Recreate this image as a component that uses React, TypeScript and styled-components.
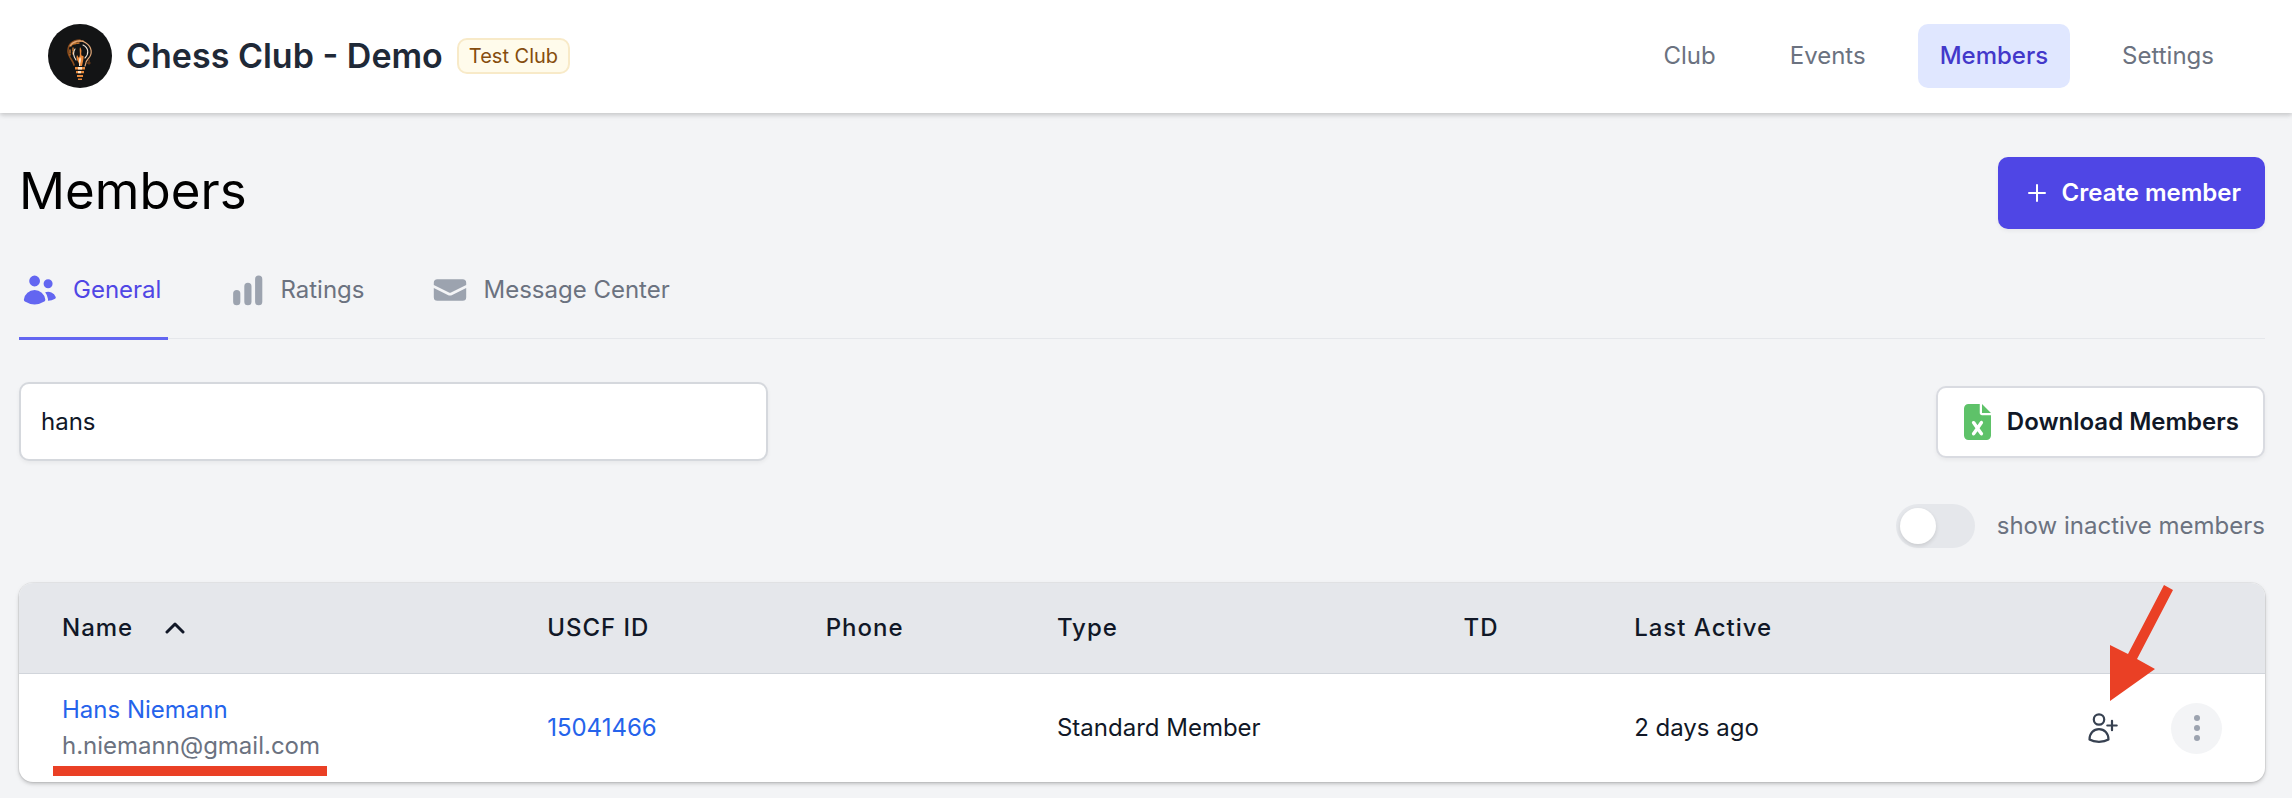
import React, { useState } from "react";
import styled, { createGlobalStyle } from "styled-components";
import { FaFileExcel } from "react-icons/fa6";

const GlobalStyle = createGlobalStyle`
  *, *::before, *::after { box-sizing: border-box; }
  body {
    margin: 0;
    background: #f3f4f6;
    color: #111827;
    font-family: Inter, "Liberation Sans", sans-serif;
    font-size: 24px;
    line-height: 36px;
  }
  button, input { font: inherit; color: inherit; }
  a { text-decoration: none; }
`;

const Header = styled.header`
  display: flex;
  align-items: center;
  justify-content: space-between;
  padding: 24px 56px 25px 48px;
  background: #fff;
  box-shadow: 0 2px 6px rgba(0, 0, 0, 0.1), 0 2px 4px rgba(0, 0, 0, 0.1);
`;

const Brand = styled.div`
  display: flex;
  align-items: center;
  gap: 14px;
`;

const ClubName = styled.span`
  color: #1f2937;
  font-size: 34px;
  font-weight: 600;
  line-height: 44px;
`;

const Badge = styled.span`
  padding: 0 10px;
  border: 2px solid #f8eac8;
  border-radius: 10px;
  background: #fffbeb;
  color: #854d0e;
  font-size: 20px;
  line-height: 32px;
`;

const MainNav = styled.nav`
  display: flex;
  gap: 30px;
`;

const NavLink = styled.a<{ $active?: boolean }>`
  padding: 14px 22px;
  border-radius: 10px;
  background: ${(p) => (p.$active ? "#e0e7ff" : "transparent")};
  color: ${(p) => (p.$active ? "#4338ca" : "#6b7280")};
  font-weight: ${(p) => (p.$active ? 500 : 400)};
`;

const Main = styled.main`
  padding: 44px 27px 16px 19px;
`;

const TitleRow = styled.div`
  display: flex;
  align-items: center;
  justify-content: space-between;
`;

const Title = styled.h1`
  margin: 0;
  padding-bottom: 4px;
  color: #000;
  font-size: 51px;
  font-weight: 400;
  line-height: 64px;
`;

const Button = styled.button<{ $primary?: boolean }>`
  display: flex;
  align-items: center;
  gap: 16px;
  height: 72px;
  padding: 0 24px 0 ${(p) => (p.$primary ? "30px" : "26px")};
  border: ${(p) => (p.$primary ? "0" : "2px solid #d9dbe1")};
  border-radius: 10px;
  background: ${(p) => (p.$primary ? "#4f46e5" : "#fff")};
  color: ${(p) => (p.$primary ? "#fff" : "#111827")};
  font-weight: 600;
  box-shadow: 0 2px 4px rgba(0, 0, 0, 0.05);
`;

const ExcelIcon = styled(FaFileExcel)`
  width: 27px;
  height: 36px;
  fill: #5ec269;
`;

const Tabs = styled.nav`
  display: flex;
  gap: 58px;
  margin-top: 14px;
  border-bottom: 1px solid #e5e7eb;
`;

const Tab = styled.a<{ $active?: boolean }>`
  display: flex;
  align-items: center;
  gap: 15px;
  margin-bottom: -2px;
  padding: 29px 7px 29px 3px;
  border-bottom: 3px solid ${(p) => (p.$active ? "#6366f1" : "transparent")};
  color: ${(p) => (p.$active ? "#4f46e5" : "#6b7280")};

  svg {
    width: 36px;
    height: 36px;
    fill: ${(p) => (p.$active ? "#6366f1" : "#9ca3af")};
  }
`;

const Controls = styled.div`
  display: flex;
  align-items: center;
  justify-content: space-between;
  margin-top: 43px;
`;

const SearchInput = styled.input`
  width: 33.3333%;
  height: 79px;
  padding: 0 20px;
  border: 2px solid #d5d8dd;
  border-radius: 10px;
  background: #fff;
  box-shadow: 0 2px 4px rgba(0, 0, 0, 0.05);
`;

const ToggleLabel = styled.label`
  display: flex;
  align-items: center;
  gap: 22px;
  width: max-content;
  margin: 43px 0 0 auto;
  color: #6b7280;
`;

const Toggle = styled.input`
  appearance: none;
  display: flex;
  align-items: center;
  width: 79px;
  height: 44px;
  margin: 0;
  padding: 0 4px;
  border-radius: 22px;
  background: #e5e7eb;

  &::before {
    content: "";
    width: 36px;
    height: 36px;
    border-radius: 50%;
    background: #fff;
    box-shadow: 0 2px 4px rgba(0, 0, 0, 0.12);
  }

  &:checked {
    justify-content: flex-end;
    background: #4f46e5;
  }
`;

const TableCard = styled.div`
  position: relative;
  margin-top: 35px;
  border-radius: 14px;
  background: #fff;
  box-shadow: 0 0 0 1px rgba(0, 0, 0, 0.05), 0 2px 5px rgba(0, 0, 0, 0.12), 0 2px 3px rgba(0, 0, 0, 0.1);
`;

const Table = styled.table`
  width: 100%;
  table-layout: fixed;
  border-collapse: separate;
  border-spacing: 0;
`;

const Col = styled.col<{ $width?: string }>`
  width: ${(p) => p.$width ?? "auto"};
`;

const HeadCell = styled.th`
  height: 91px;
  padding: 0 43px;
  border-bottom: 1px solid #d1d5db;
  background: #e5e7eb;
  font-weight: 500;
  letter-spacing: 1px;
  text-align: left;
  white-space: nowrap;

  &:first-child { border-top-left-radius: 14px; }
  &:last-child { border-top-right-radius: 14px; }
`;

const SortButton = styled.button`
  display: flex;
  align-items: center;
  gap: 32px;
  padding: 0;
  border: 0;
  background: none;
  letter-spacing: inherit;
`;

const Cell = styled.td`
  padding: 18px 43px;
  white-space: nowrap;
`;

const TextLink = styled.a`
  color: #2563eb;
`;

const Email = styled.div`
  position: relative;
  width: max-content;
  color: #6b7280;
`;

const Underline = styled.span`
  position: absolute;
  right: -7px;
  bottom: -12px;
  left: -9px;
  height: 10px;
  background: #ea4025;
`;

const Actions = styled.div`
  display: flex;
  align-items: center;
  justify-content: flex-end;
  gap: 50px;
`;

const IconButton = styled.button<{ $round?: boolean }>`
  display: grid;
  place-items: center;
  width: ${(p) => (p.$round ? "51px" : "36px")};
  height: ${(p) => (p.$round ? "51px" : "36px")};
  padding: 0;
  border: 0;
  border-radius: 50%;
  background: ${(p) => (p.$round ? "#f3f4f6" : "transparent")};
`;

const Arrow = styled.svg`
  position: absolute;
  top: 0;
  right: 92px;
  pointer-events: none;
`;

const ClubLogo = () => (
  <svg width="64" height="64" viewBox="0 0 64 64" aria-hidden="true">
    <circle cx="32" cy="32" r="32" fill="#131415" />
    <g fill="none" strokeLinecap="round">
      <path d="M26 41c-1-5-6-8-6-14 0-7 5-11 12-11" stroke="#8a4b1b" strokeWidth="1.6" />
      <path d="M23 22c2-4 7-5 12-5M25 20l6-1M22 26v5M25 24v6" stroke="#c9782f" strokeWidth="1.4" strokeDasharray="3 1.4" />
      <path d="M22 22c3-5 11-7 16-3 6 4 7 11 2 16-2 2-2 4-3 7" stroke="#e2a878" strokeWidth="1.2" />
      <path d="M35 21c6 3 6 9 2 13M27 25c-3 4-1 8 1 11" stroke="#f4e6d8" strokeWidth="1.1" />
      <path d="M39 39h3M41 36v4" stroke="#6b3a17" strokeWidth="1.5" />
    </g>
    <path d="M32 23c3 4 0 6 2 9 3-2 1 5 0 10h-3c1-4-4-6-2-11l2 3c2-4 0-6 1-11z" fill="#ee8a3a" />
    <path d="M32 33c2 3 0 5 0 9h-1c1-3-1-5 1-9z" fill="#fff1dc" />
    <path d="M27 43h10v2.500H27zM28 47h8v2.200h-8zM29 51h6v2h-6zM30 54.500h4v1.500h-4z" fill="#e98a3c" />
    <path d="M30 43h4v2.500h-4zM30 47h3v2.200h-3z" fill="#ffe3c2" />
  </svg>
);

const UsersIcon = () => (
  <svg viewBox="0 0 20 20" aria-hidden="true">
    <path d="M7 8a3 3 0 1 0 0-6 3 3 0 0 0 0 6ZM14.5 9a2.5 2.5 0 1 0 0-5 2.5 2.5 0 0 0 0 5ZM1.615 16.428a1.224 1.224 0 0 1-.569-1.175 6.002 6.002 0 0 1 11.908 0c.058.467-.172.92-.57 1.174A9.953 9.953 0 0 1 7 18a9.953 9.953 0 0 1-5.385-1.572ZM14.5 16h-.106c.07-.297.088-.611.048-.933a7.47 7.47 0 0 0-1.588-3.755 4.502 4.502 0 0 1 5.874 2.636.818.818 0 0 1-.36.98A7.465 7.465 0 0 1 14.5 16Z" />
  </svg>
);

const ChartIcon = () => (
  <svg viewBox="0 0 20 20" aria-hidden="true">
    <path d="M16.500 2A2 2 0 0 0 14.500 4v12.500a2 2 0 0 0 4 0V4a2 2 0 0 0-2-2ZM10.500 6a2 2 0 0 0-2 2v8.500a2 2 0 0 0 4 0V8a2 2 0 0 0-2-2ZM4.300 10a2 2 0 0 0-2 2v4.500a2 2 0 0 0 4 0V12a2 2 0 0 0-2-2Z" />
  </svg>
);

const MailIcon = () => (
  <svg viewBox="0 0 20 20" aria-hidden="true">
    <path d="M3 4a2 2 0 0 0-2 2v1.161l8.441 4.221a1.25 1.25 0 0 0 1.118 0L19 7.162V6a2 2 0 0 0-2-2H3Z" />
    <path d="m19 8.839-7.77 3.885a2.75 2.75 0 0 1-2.46 0L1 8.839V14a2 2 0 0 0 2 2h14a2 2 0 0 0 2-2V8.839Z" />
  </svg>
);

const PlusIcon = () => (
  <svg width="18" height="18" viewBox="0 0 18 18" stroke="currentColor" strokeWidth="2" strokeLinecap="round" aria-hidden="true">
    <path d="M9 1v16M1 9h16" />
  </svg>
);

const ChevronUp = () => (
  <svg width="20" height="14" viewBox="0 0 20 14" fill="none" stroke="currentColor" strokeWidth="3" strokeLinecap="round" strokeLinejoin="round" aria-hidden="true">
    <path d="M2 11l8-8 8 8" />
  </svg>
);

const UserPlusIcon = () => (
  <svg width="36" height="36" viewBox="0 0 36 36" fill="none" stroke="#374151" strokeWidth="2.2" strokeLinecap="round" strokeLinejoin="round" aria-hidden="true">
    <circle cx="14" cy="9.500" r="5.200" />
    <path d="M4.500 29.500c0-6 4-10.300 9.500-10.300s9.500 4.300 9.500 10.300c-2.500 1.600-6 2.300-9.500 2.300s-7-.7-9.500-2.300Z" />
    <path d="M27 10.800v9.400M22.300 15.500h9.400" />
  </svg>
);

const DotsIcon = () => (
  <svg width="6" height="28" viewBox="0 0 6 28" fill="#9ca3af" aria-hidden="true">
    <circle cx="3" cy="4" r="3" />
    <circle cx="3" cy="14" r="3" />
    <circle cx="3" cy="24" r="3" />
  </svg>
);

const navItems = ["Club", "Events", "Members", "Settings"];
const tabItems = [
  { label: "General", Icon: UsersIcon },
  { label: "Ratings", Icon: ChartIcon },
  { label: "Message Center", Icon: MailIcon },
];
const columns = [
  { label: "Name", width: "21.6%" },
  { label: "USCF ID", width: "12.4%" },
  { label: "Phone", width: "10.3%" },
  { label: "Type", width: "18.1%" },
  { label: "TD", width: "7.6%" },
  { label: "Last Active", width: undefined },
  { label: "", width: "14%" },
];
const members = [
  { name: "Hans Niemann", email: "h.niemann@gmail.com", uscf: "15041466", phone: "", type: "Standard Member", td: "", active: "2 days ago" },
];

export default function App() {
  const [query, setQuery] = useState("hans");
  const [showInactive, setShowInactive] = useState(false);

  return (
    <>
      <GlobalStyle />
      <Header>
        <Brand>
          <ClubLogo />
          <ClubName>Chess Club - Demo</ClubName>
          <Badge>Test Club</Badge>
        </Brand>
        <MainNav>
          {navItems.map((item) => (
            <NavLink key={item} href="#" $active={item === "Members"}>
              {item}
            </NavLink>
          ))}
        </MainNav>
      </Header>
      <Main>
        <TitleRow>
          <Title>Members</Title>
          <Button type="button" $primary>
            <PlusIcon />
            Create member
          </Button>
        </TitleRow>
        <Tabs>
          {tabItems.map(({ label, Icon }) => (
            <Tab key={label} href="#" $active={label === "General"}>
              <Icon />
              {label}
            </Tab>
          ))}
        </Tabs>
        <Controls>
          <SearchInput
            type="text"
            aria-label="Search members"
            value={query}
            onChange={(e) => setQuery(e.target.value)}
          />
          <Button type="button">
            <ExcelIcon aria-hidden="true" />
            Download Members
          </Button>
        </Controls>
        <ToggleLabel>
          <Toggle type="checkbox" checked={showInactive} onChange={(e) => setShowInactive(e.target.checked)} />
          show inactive members
        </ToggleLabel>
        <TableCard>
          <Table>
            <colgroup>
              {columns.map((c) => (
                <Col key={c.label} $width={c.width} />
              ))}
            </colgroup>
            <thead>
              <tr>
                {columns.map((c) => (
                  <HeadCell key={c.label} scope="col">
                    {c.label === "Name" ? (
                      <SortButton type="button">
                        Name
                        <ChevronUp />
                      </SortButton>
                    ) : (
                      c.label
                    )}
                  </HeadCell>
                ))}
              </tr>
            </thead>
            <tbody>
              {members.map((m) => (
                <tr key={m.uscf}>
                  <Cell>
                    <TextLink href="#">{m.name}</TextLink>
                    <Email>
                      {m.email}
                      <Underline />
                    </Email>
                  </Cell>
                  <Cell>
                    <TextLink href="#">{m.uscf}</TextLink>
                  </Cell>
                  <Cell>{m.phone}</Cell>
                  <Cell>{m.type}</Cell>
                  <Cell>{m.td}</Cell>
                  <Cell>{m.active}</Cell>
                  <Cell>
                    <Actions>
                      <IconButton type="button" aria-label="Add user">
                        <UserPlusIcon />
                      </IconButton>
                      <IconButton type="button" aria-label="More actions" $round>
                        <DotsIcon />
                      </IconButton>
                    </Actions>
                  </Cell>
                </tr>
              ))}
            </tbody>
          </Table>
          <Arrow width="64" height="120" viewBox="0 0 64 120" fill="#ea4025" aria-hidden="true">
            <path d="M55 2l9 5-36 69 18 10L1 118V62l18 9Z" />
          </Arrow>
        </TableCard>
      </Main>
    </>
  );
}
